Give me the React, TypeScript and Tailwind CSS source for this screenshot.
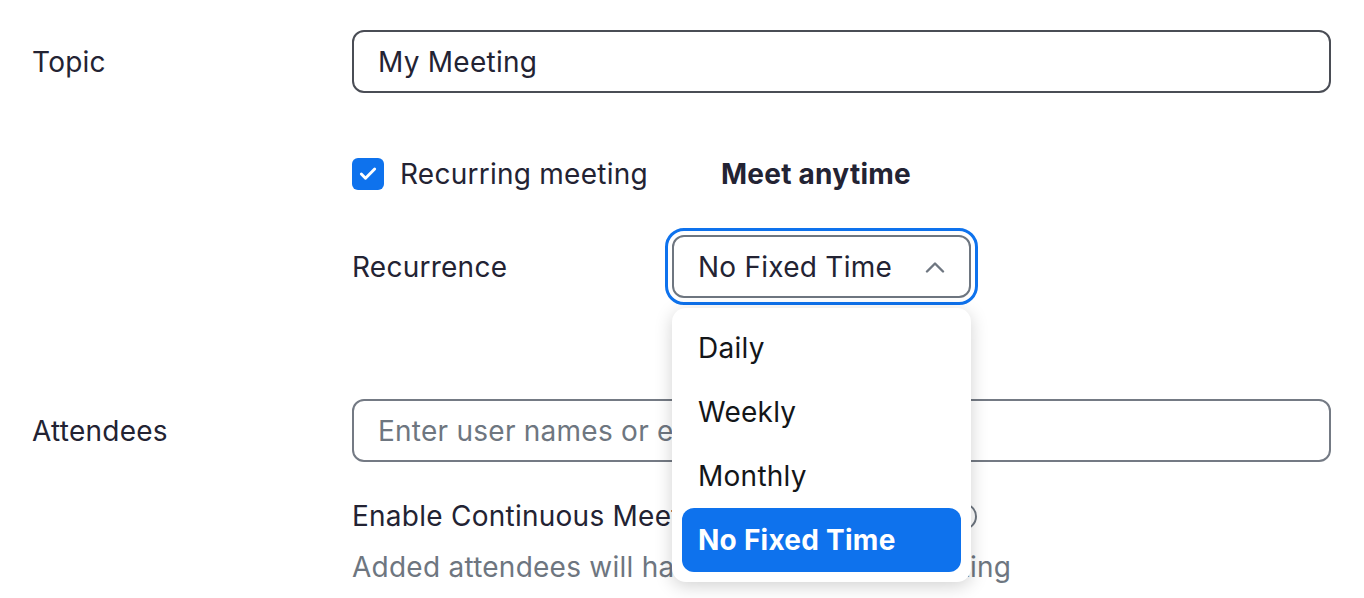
import { Check } from "lucide-react";

const font = { fontFamily: "Inter, 'Noto Sans', sans-serif" };

function ChevronUp() {
  return (
    <svg width="20" height="12" viewBox="0 0 20 12" fill="none" aria-hidden="true">
      <path d="M2 10.5 10 2.5l8 8" stroke="#6e7680" strokeWidth="2.4" strokeLinecap="round" strokeLinejoin="round" />
    </svg>
  );
}

export default function App() {
  const options = ["Daily", "Weekly", "Monthly", "No Fixed Time"];
  const selected = "No Fixed Time";

  return (
    <div className="h-[598px] w-[1364px] overflow-hidden bg-white text-[#232333]" style={font}>
      <div className="flex flex-col pl-8 pr-[33px] pt-[30px] text-[28px] tracking-[0.25px]">
        {/* Topic */}
        <div className="flex items-center">
          <span className="w-[320px] shrink-0">Topic</span>
          <div className="flex h-[63px] flex-1 items-center rounded-[12px] border-2 border-[#4a4d55] px-6">
            My Meeting
          </div>
        </div>

        {/* Recurring */}
        <div className="ml-[320px] mt-[65px] flex h-8 items-center">
          <span className="flex h-8 w-8 items-center justify-center rounded-[6px] bg-[#0e72ed]">
            <Check className="h-5 w-5 text-white" strokeWidth={3.5} />
          </span>
          <span className="ml-4 w-[321px]">Recurring meeting</span>
          <span className="font-bold">Meet anytime</span>
        </div>

        {/* Recurrence */}
        <div className="ml-[320px] mt-[45px] flex items-center">
          <span className="w-[320px] shrink-0">Recurrence</span>
          <div className="relative">
            <div className="flex h-[63px] w-[299px] items-center justify-between rounded-[12px] border-2 border-[#6e7680] pl-6 pr-6 outline-[3px] outline-offset-[4px] outline-[#0e72ed] outline-solid">
              <span>No Fixed Time</span>
              <ChevronUp />
            </div>
            <ul className="absolute left-0 top-[73px] z-10 w-[299px] rounded-[14px] bg-white px-[10px] pb-[10px] pt-2 shadow-[0_4px_18px_rgba(0,0,0,0.18)]">
              {options.map((o) => (
                <li
                  key={o}
                  className={`flex h-16 items-center rounded-[12px] px-4 ${
                    o === selected ? "bg-[#0e72ed] font-bold text-white" : "text-[#131619]"
                  }`}
                >
                  {o}
                </li>
              ))}
            </ul>
          </div>
        </div>

        {/* Attendees */}
        <div className="mt-[101px] flex items-center">
          <span className="w-[320px] shrink-0">Attendees</span>
          <div className="flex h-[63px] flex-1 items-center rounded-[12px] border-2 border-[#747a84] px-6 text-[#6e7680]">
            Enter user names or email addresses
          </div>
        </div>

        <div className="ml-[320px] mt-[38px] flex h-8 items-center">
          <span className="w-[598px] shrink-0">Enable Continuous Meeting Chat</span>
          <span className="h-[27px] w-[27px] rounded-full border-[2.5px] border-[#6e7680]" />
        </div>
        <div className="ml-[320px] mt-[19px] flex h-8 items-center text-[#6e7680]">
          Added attendees will have access to the meeting
        </div>
      </div>
    </div>
  );
}
